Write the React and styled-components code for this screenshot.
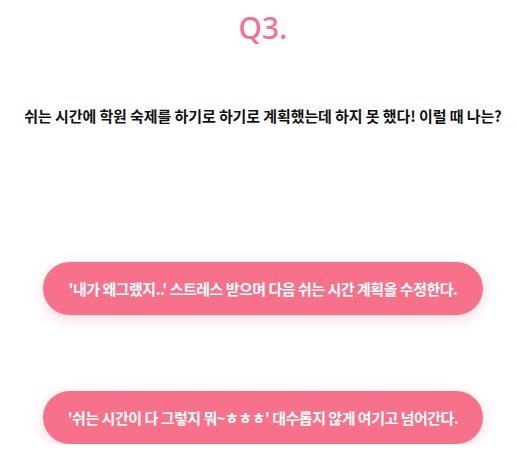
import React from "react";
import styled, { createGlobalStyle } from "styled-components";

const GlobalStyle = createGlobalStyle`
  body {
    margin: 0;
    background: #fff;
    font-family: "Noto Sans CJK KR", "Noto Sans", sans-serif;
  }
`;

const Page = styled.div`
  display: flex;
  flex-direction: column;
  align-items: center;
  padding: 8px 0 0 9px;
`;

const Title = styled.h1`
  margin: 0;
  font-family: "Noto Sans", "Noto Sans CJK KR", sans-serif;
  font-size: 30px;
  font-weight: 500;
  line-height: 40px;
  color: #f8718b;
`;

const Question = styled.p`
  margin: 56px 0 0;
  font-size: 15px;
  font-weight: 700;
  line-height: 24px;
  color: #111;
  letter-spacing: -0.1px;
`;

const Answers = styled.div`
  display: flex;
  flex-direction: column;
  gap: 76px;
  margin-top: 134px;
`;

const Answer = styled.button`
  width: 440px;
  height: 53px;
  border: none;
  border-radius: 27px;
  background: #f8718b;
  color: #fff;
  font-family: inherit;
  font-size: 15px;
  font-weight: 700;
  letter-spacing: -0.5px;
  box-shadow: 0 4px 14px rgba(248, 113, 139, 0.28);
  cursor: pointer;
`;

const answers = [
  "'내가 왜그랬지..' 스트레스 받으며 다음 쉬는 시간 계획을 수정한다.",
  "'쉬는 시간이 다 그렇지 뭐~ㅎㅎㅎ' 대수롭지 않게 여기고 넘어간다.",
];

export default function App() {
  return (
    <>
      <GlobalStyle />
      <Page>
        <Title>Q3.</Title>
        <Question>
          쉬는 시간에 학원 숙제를 하기로 하기로 계획했는데 하지 못 했다! 이럴 때 나는?
        </Question>
        <Answers>
          {answers.map((text) => (
            <Answer key={text}>{text}</Answer>
          ))}
        </Answers>
      </Page>
    </>
  );
}
